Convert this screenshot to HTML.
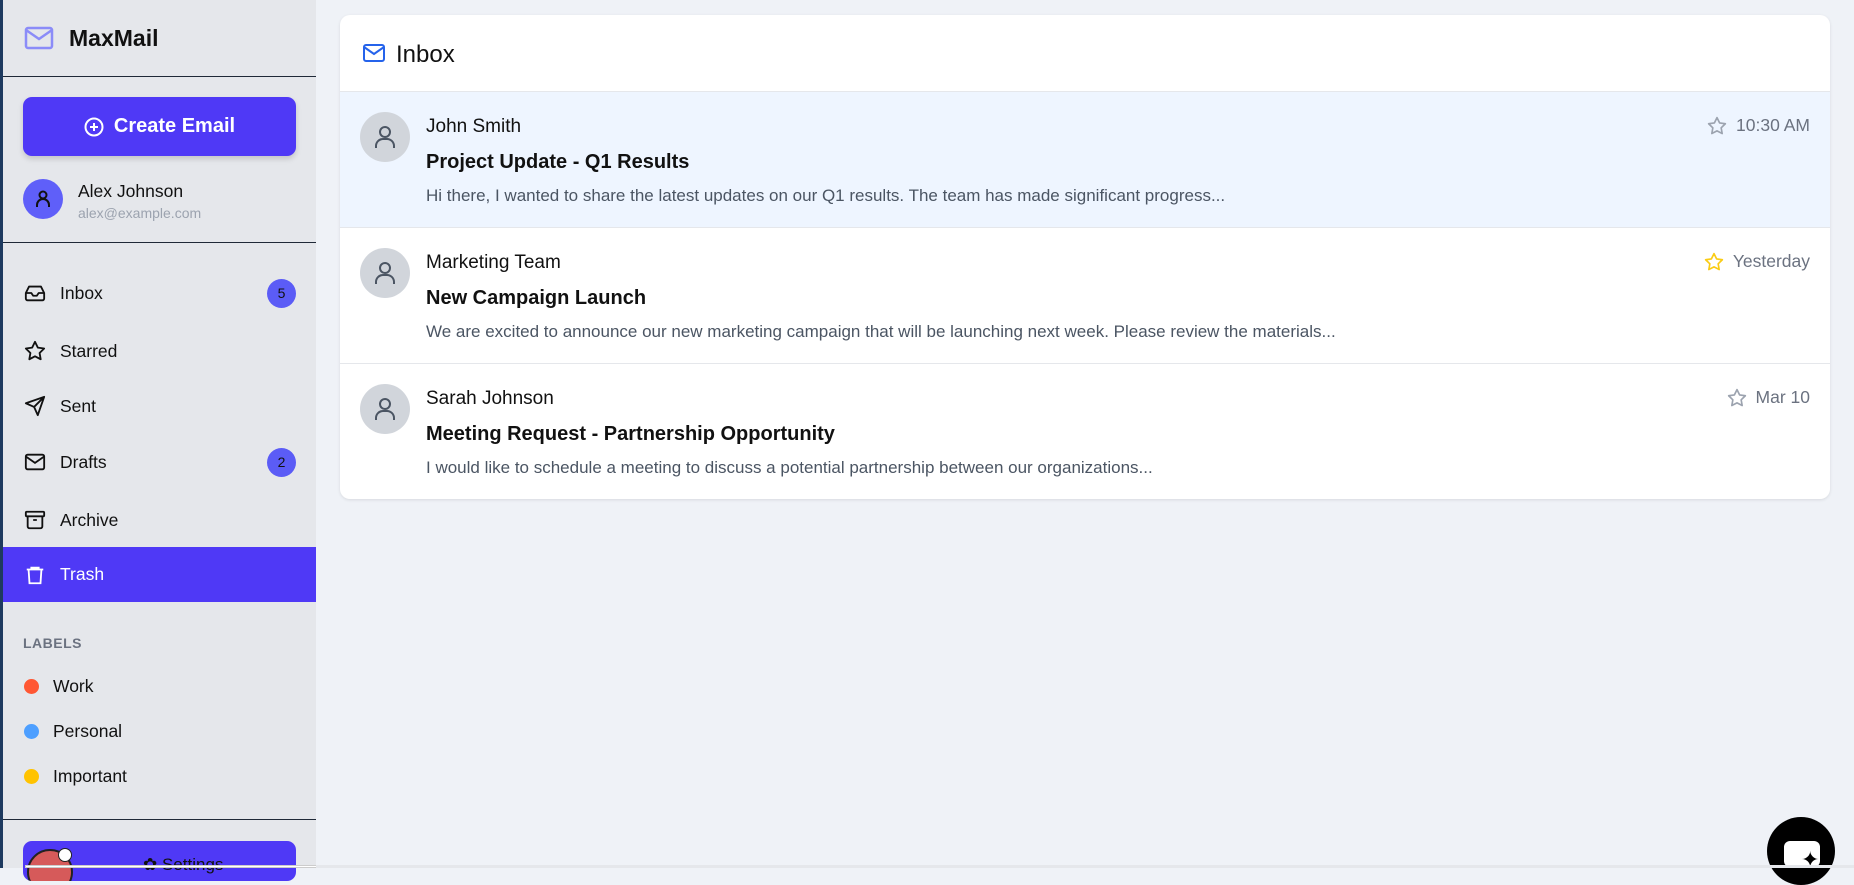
<!DOCTYPE html>
<html><head><meta charset="utf-8"><style>
*{box-sizing:border-box;margin:0;padding:0}
body{width:1854px;height:868px;overflow:hidden;background:#eff2f7;font-family:"Liberation Sans",sans-serif;position:relative;color:#111}
.sb{position:absolute;left:0;top:0;width:316px;height:868px;background:#e5e7eb;border-left:3px solid #1e3a5f}
.abs{position:absolute}
.line{position:absolute;left:3px;width:313px;height:1px;background:#1f2937}
.nav{position:absolute;left:3px;width:313px;height:56px;display:flex;align-items:center;font-size:17.5px;color:#111}
.nav svg{position:absolute;left:21px}
.nav span{position:absolute;left:57px}
.badge{position:absolute;left:264px;width:29px;height:29px;border-radius:50%;background:#5b5cf6;color:#111;font-size:14px;display:flex;align-items:center;justify-content:center}
.lbl{position:absolute;left:53px;font-size:17.5px;color:#111}
.dot{position:absolute;left:24px;width:15px;height:15px;border-radius:50%}
.card{position:absolute;left:340px;top:15px;width:1490px;height:484px;background:#fff;border-radius:10px;box-shadow:0 1px 3px rgba(0,0,0,.1);overflow:hidden}
.row{position:absolute;left:0;width:1490px;height:136px;border-top:1px solid #e5e7eb}
.av{position:absolute;left:20px;top:20px;width:50px;height:50px;border-radius:50%;background:#d1d5db}
.av svg{position:absolute;left:13px;top:12px}
.nm{position:absolute;left:86px;top:24px;font-size:19px;font-weight:500}
.sj{position:absolute;left:86px;top:59px;font-size:20px;font-weight:bold}
.pv{position:absolute;left:86px;top:94px;font-size:17px;color:#4b5563}
.tm{position:absolute;right:20px;top:23px;font-size:17.5px;color:#6b7280;display:flex;align-items:center;gap:9px}
</style></head><body>
<div class="sb">
<svg class="abs" style="left:21px;top:26px" width="30" height="24" viewBox="0 0 30 24" fill="none" stroke="#8b8cf8" stroke-width="2.5"><rect x="2" y="2" width="26" height="20" rx="2"/><path d="M2 4l13 9 13-9"/></svg>
<div class="abs" style="left:66px;top:25px;font-size:23px;font-weight:bold">MaxMail</div>
</div>
<div class="line" style="top:76px"></div>
<div class="abs" style="left:23px;top:97px;width:273px;height:59px;background:#4f39f6;border-radius:9px;box-shadow:0 3px 6px rgba(0,0,0,.15);color:#fff;font-size:20px;font-weight:bold;display:flex;align-items:center;justify-content:center;gap:10px">
<svg width="20" height="20" viewBox="0 0 20 20" fill="none" stroke="#fff" stroke-width="2"><circle cx="10" cy="10" r="8.5"/><path d="M10 6v8M6 10h8"/></svg>Create Email</div>
<div class="abs" style="left:23px;top:179px;width:40px;height:40px;border-radius:50%;background:#5f5ff9"><svg style="position:absolute;left:12px;top:10px" width="16" height="20" viewBox="0 0 16 20" fill="none" stroke="#111" stroke-width="2"><circle cx="8" cy="6" r="3.5"/><path d="M2 18v-2a5 5 0 0 1 12 0v2"/></svg></div>
<div class="abs" style="left:78px;top:181px;font-size:17.5px;font-weight:500">Alex Johnson</div>
<div class="abs" style="left:78px;top:205px;font-size:14px;color:#9ca3af">alex@example.com</div>
<div class="line" style="top:242px"></div>

<div class="nav" style="top:265px"><svg width="22" height="22" viewBox="0 0 24 24" fill="none" stroke="#111" stroke-width="2" stroke-linejoin="round"><path d="M22 12h-6l-2 3h-4l-2-3H2"/><path d="M5.5 5h13L22 12v6a2 2 0 0 1-2 2H4a2 2 0 0 1-2-2v-6z"/></svg><span>Inbox</span><div class="badge">5</div></div>
<div class="nav" style="top:323px"><svg width="22" height="22" viewBox="0 0 24 24" fill="none" stroke="#111" stroke-width="2" stroke-linejoin="round"><path d="M12 2l3.1 6.3 6.9 1-5 4.9 1.2 6.8L12 17.8 5.8 21l1.2-6.8-5-4.9 6.9-1z"/></svg><span>Starred</span></div>
<div class="nav" style="top:378px"><svg width="22" height="22" viewBox="0 0 24 24" fill="none" stroke="#111" stroke-width="2" stroke-linejoin="round"><path d="M22 2L11 13M22 2l-7 20-4-9-9-4z"/></svg><span>Sent</span></div>
<div class="nav" style="top:434px"><svg width="22" height="22" viewBox="0 0 24 24" fill="none" stroke="#111" stroke-width="2"><rect x="2" y="4" width="20" height="16" rx="2"/><path d="M2 6l10 7 10-7"/></svg><span>Drafts</span><div class="badge">2</div></div>
<div class="nav" style="top:492px"><svg width="22" height="22" viewBox="0 0 24 24" fill="none" stroke="#111" stroke-width="2"><rect x="2" y="3" width="20" height="5" rx="1"/><path d="M4 8v11a2 2 0 0 0 2 2h12a2 2 0 0 0 2-2V8M10 12h4"/></svg><span>Archive</span></div>
<div class="nav" style="top:547px;height:55px;background:#4f39f6;color:#fff"><svg width="22" height="22" viewBox="0 0 24 24" fill="none" stroke="#fff" stroke-width="2"><path d="M3 6h18M8 6V4h8v2M5 6l1 15h12l1-15"/></svg><span>Trash</span></div>

<div class="abs" style="left:23px;top:635px;font-size:14px;color:#6b7280;font-weight:bold;letter-spacing:.5px">LABELS</div>
<div class="dot" style="top:679px;background:#ff5733"></div><div class="lbl" style="top:676px">Work</div>
<div class="dot" style="top:724px;background:#4d9fff"></div><div class="lbl" style="top:721px">Personal</div>
<div class="dot" style="top:769px;background:#ffc300"></div><div class="lbl" style="top:766px">Important</div>
<div class="line" style="top:819px"></div>
<div class="abs" style="left:23px;top:841px;width:273px;height:40px;background:#4f39f6;border-radius:9px;overflow:hidden">
<div class="abs" style="left:4px;top:8px;width:46px;height:46px;border-radius:50%;background:#d65a5a;border:2px solid #222"></div>
<div class="abs" style="left:35px;top:7px;width:14px;height:14px;border-radius:50%;background:#fff;border:1.5px solid #222"></div>
<div class="abs" style="left:120px;top:14px;color:#111;font-size:17px">✿ Settings</div></div>
<div class="abs" style="left:25px;top:865px;width:360px;height:3px;background:#fff;border:1px solid #ccc"></div>

<div class="card">
<svg class="abs" style="left:23px;top:29px" width="22" height="18" viewBox="0 0 22 18" fill="none" stroke="#2563eb" stroke-width="2"><rect x="1" y="1" width="20" height="16" rx="2"/><path d="M1 3l10 7 10-7"/></svg>
<div class="abs" style="left:56px;top:26px;font-size:24px;font-weight:500">Inbox</div>
<div class="row" style="top:76px;background:#eef5ff">
<div class="av"><svg width="24" height="26" viewBox="0 0 24 26" fill="none" stroke="#4b5563" stroke-width="2"><circle cx="12" cy="8" r="5"/><path d="M3 24v-2a7 7 0 0 1 7-7h4a7 7 0 0 1 7 7v2"/></svg></div>
<div class="nm">John Smith</div><div class="sj">Project Update - Q1 Results</div>
<div class="pv">Hi there, I wanted to share the latest updates on our Q1 results. The team has made significant progress...</div>
<div class="tm"><svg width="20" height="20" viewBox="0 0 24 24" fill="none" stroke="#9ca3af" stroke-width="2" stroke-linejoin="round"><path d="M12 2l3.1 6.3 6.9 1-5 4.9 1.2 6.8L12 17.8 5.8 21l1.2-6.8-5-4.9 6.9-1z"/></svg>10:30 AM</div></div>
<div class="row" style="top:212px">
<div class="av"><svg width="24" height="26" viewBox="0 0 24 26" fill="none" stroke="#4b5563" stroke-width="2"><circle cx="12" cy="8" r="5"/><path d="M3 24v-2a7 7 0 0 1 7-7h4a7 7 0 0 1 7 7v2"/></svg></div>
<div class="nm">Marketing Team</div><div class="sj">New Campaign Launch</div>
<div class="pv">We are excited to announce our new marketing campaign that will be launching next week. Please review the materials...</div>
<div class="tm"><svg width="20" height="20" viewBox="0 0 24 24" fill="none" stroke="#facc15" stroke-width="2" stroke-linejoin="round"><path d="M12 2l3.1 6.3 6.9 1-5 4.9 1.2 6.8L12 17.8 5.8 21l1.2-6.8-5-4.9 6.9-1z"/></svg>Yesterday</div></div>
<div class="row" style="top:348px">
<div class="av"><svg width="24" height="26" viewBox="0 0 24 26" fill="none" stroke="#4b5563" stroke-width="2"><circle cx="12" cy="8" r="5"/><path d="M3 24v-2a7 7 0 0 1 7-7h4a7 7 0 0 1 7 7v2"/></svg></div>
<div class="nm">Sarah Johnson</div><div class="sj">Meeting Request - Partnership Opportunity</div>
<div class="pv">I would like to schedule a meeting to discuss a potential partnership between our organizations...</div>
<div class="tm"><svg width="20" height="20" viewBox="0 0 24 24" fill="none" stroke="#9ca3af" stroke-width="2" stroke-linejoin="round"><path d="M12 2l3.1 6.3 6.9 1-5 4.9 1.2 6.8L12 17.8 5.8 21l1.2-6.8-5-4.9 6.9-1z"/></svg>Mar 10</div></div>
</div>

<div class="abs" style="left:1767px;top:817px;width:68px;height:68px;border-radius:50%;background:#000">
<div class="abs" style="left:17px;top:24px;width:36px;height:26px;background:#fff;border-radius:6px"></div>
<div class="abs" style="left:34px;top:30px;color:#000;font-size:22px">✦</div></div>
<div class="abs" style="left:316px;top:865px;width:1538px;height:3px;background:#e5e7eb"></div>
</body></html>
